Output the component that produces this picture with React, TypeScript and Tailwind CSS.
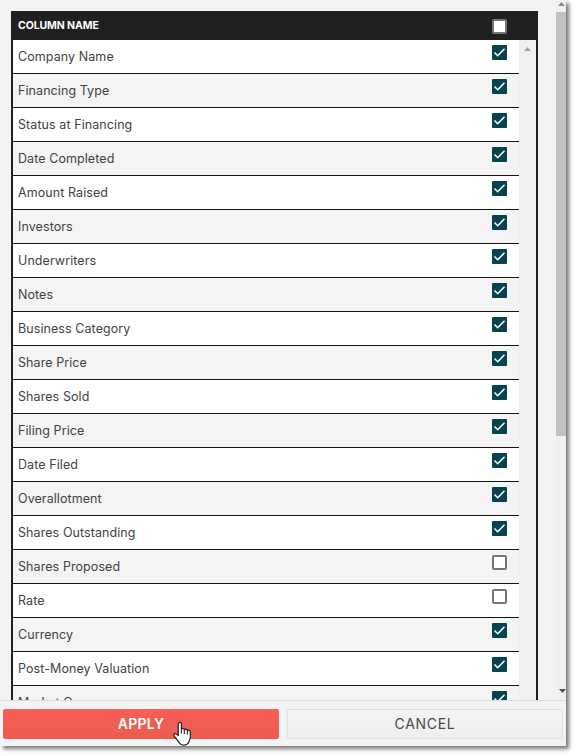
import React, { useState } from 'react';

interface Column {
  name: string;
  checked: boolean;
}

const initialColumns: Column[] = [
  { name: 'Company Name', checked: true },
  { name: 'Financing Type', checked: true },
  { name: 'Status at Financing', checked: true },
  { name: 'Date Completed', checked: true },
  { name: 'Amount Raised', checked: true },
  { name: 'Investors', checked: true },
  { name: 'Underwriters', checked: true },
  { name: 'Notes', checked: true },
  { name: 'Business Category', checked: true },
  { name: 'Share Price', checked: true },
  { name: 'Shares Sold', checked: true },
  { name: 'Filing Price', checked: true },
  { name: 'Date Filed', checked: true },
  { name: 'Overallotment', checked: true },
  { name: 'Shares Outstanding', checked: true },
  { name: 'Shares Proposed', checked: false },
  { name: 'Rate', checked: false },
  { name: 'Currency', checked: true },
  { name: 'Post-Money Valuation', checked: true },
  { name: 'Market Cap', checked: true },
];

interface CheckboxProps {
  checked: boolean;
  label: string;
  onClick: () => void;
}

const Checkbox: React.FC<CheckboxProps> = ({ checked, label, onClick }) => (
  <button
    role="checkbox"
    aria-checked={checked}
    aria-label={label}
    onClick={onClick}
    className={`block h-[15px] w-[15px] shrink-0 ${
      checked ? 'rounded-[1px] bg-[#05444f]' : 'rounded-[2px] border-2 border-[#757575] bg-white'
    }`}
  >
    {checked && (
      <svg width="15" height="15" viewBox="0 0 15 15" fill="none" stroke="#fff" strokeWidth="1.5">
        <path d="M2.5 7.5 5.7 10.7 12.5 3.8" />
      </svg>
    )}
  </button>
);

const Cursor = () => (
  <svg className="absolute left-[173px] top-[721px]" width="20" height="26" viewBox="0 0 20 26">
    <path
      d="M5.3 14.6V3.1C5.3 .9 8.4 .9 8.4 3.1V8.3C8.8 7 11.2 7.2 11.3 8.9C12 7.6 14.3 8 14.4 9.7C15.2 8.7 17.3 9.2 17.3 11V16.2C17.3 18.1 16.7 19.2 16 20.5C15 23 13 24.2 10.9 24.2C8 24.2 6.7 22.9 5.6 20.8L1.3 15.2C.1 13.4 1.8 11.8 3.4 13.1Z"
      fill="#fff"
      stroke="#20242d"
      strokeWidth="1.2"
      strokeLinejoin="round"
    />
    <path d="M8.4 8V12.5M11.3 8.8V13M14.4 9.7V13.5" stroke="#20242d" strokeWidth="1.1" />
  </svg>
);

const App: React.FC = () => {
  const [columns, setColumns] = useState(initialColumns);
  const [allSelected, setAllSelected] = useState(false);

  const toggle = (index: number) => {
    setColumns(columns.map((c, i) => (i === index ? { ...c, checked: !c.checked } : c)));
  };

  const toggleAll = () => {
    setColumns(columns.map(c => ({ ...c, checked: !allSelected })));
    setAllSelected(!allSelected);
  };

  return (
    <div className="h-[756px] w-[576px] overflow-hidden bg-white font-['Inter',sans-serif]">
      <div className="relative flex h-[746px] w-[566px] flex-col bg-[#f3f3f3] shadow-[3px_3px_4px_#777]">
        <div className="flex h-[700px] justify-between overflow-hidden pl-[11px]">
          <div className="mt-[11px] w-[527px] border-x-2 border-[#202020]">
            <div className="flex h-[29px] items-center justify-between bg-[#202020] pl-[5px] pr-[29px]">
              <span className="text-[10.5px] font-bold tracking-[-0.1px] text-white">COLUMN NAME</span>
              <div className="mt-[2px]">
                <Checkbox checked={allSelected} label="Select all" onClick={toggleAll} />
              </div>
            </div>

            <div className="flex">
              <div className="w-[506px]">
                {columns.map((column, i) => (
                  <div
                    key={column.name}
                    className="flex h-[34px] justify-between border-b border-[#151515] bg-white pl-[5px] pr-[12px] pt-[5px] even:bg-[#f4f4f4]"
                  >
                    <span className="pt-[2px] text-[12.5px] leading-5 tracking-[0.08px] text-[#424242]">
                      {column.name}
                    </span>
                    <Checkbox checked={column.checked} label={column.name} onClick={() => toggle(i)} />
                  </div>
                ))}
              </div>
              <div className="flex w-[17px] justify-center bg-[#f0f0f0] pt-[7px]">
                <svg width="7" height="4" viewBox="0 0 7 4" fill="#a0a0a0">
                  <path d="M3.5 0 7 4H0Z" />
                </svg>
              </div>
            </div>
          </div>

          {/* Dialog scrollbar */}
          <div className="flex w-[10px] flex-col items-end bg-[#f0f0f0] pt-[2px]">
            <svg className="mr-px" width="7" height="4" viewBox="0 0 7 4" fill="#8c8c8c">
              <path d="M3.5 0 7 4H0Z" />
            </svg>
            <div className="mt-[6px] h-[424px] w-full bg-[#c1c1c1]" />
            <svg className="mt-[253px]" width="7" height="4" viewBox="0 0 7 4" fill="#505050">
              <path d="M0 0H7L3.5 4Z" />
            </svg>
          </div>
        </div>

        <div className="flex h-[46px] gap-2 border-t border-[#dedede] bg-[#f3f3f3] px-[3px] pt-[8px]">
          <button className="h-[30px] w-[276px] rounded-[2px] bg-gradient-to-b from-[#f65f55] to-[#eb5b50] pb-px text-[14px] font-semibold tracking-[0.3px] text-white">
            APPLY
          </button>
          <button className="h-[30px] w-[276px] rounded-[2px] border border-[#dedede] bg-gradient-to-b from-[#f4f4f4] to-[#eeeeee] pb-px text-[14px] tracking-[0.7px] text-[#484848]">
            CANCEL
          </button>
        </div>
        <Cursor />
      </div>
    </div>
  );
};

export default App;
